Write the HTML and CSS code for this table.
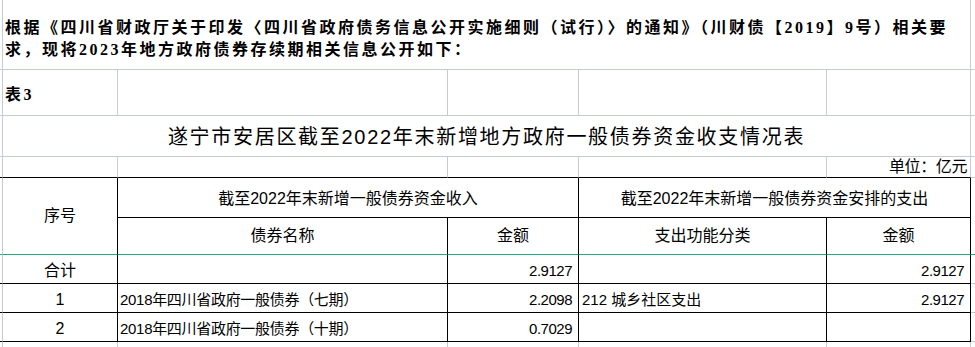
FILE: index.html
```html
<!DOCTYPE html>
<html lang="zh-CN">
<head>
<meta charset="utf-8">
<title>遂宁市安居区截至2022年末新增地方政府一般债券资金收支情况表</title>
<link rel="stylesheet" href="styles.css">
</head>
<body>
<div class="sheet">
  <!-- row 1 -->
  <div class="c edge"></div>
  <div class="c span5 intro">根据《四川省财政厅关于印发〈四川省政府债务信息公开实施细则（试行）〉的通知》（川财债【2019】9号）相关要<br>求，现将2023年地方政府债券存续期相关信息公开如下：</div>
  <div class="c tail"></div>
  <!-- row 2 -->
  <div class="c edge"></div>
  <div class="c label">表3</div>
  <div class="c"></div>
  <div class="c"></div>
  <div class="c"></div>
  <div class="c"></div>
  <div class="c tail"></div>
  <!-- row 3 -->
  <div class="c edge"></div>
  <div class="c span5 title">遂宁市安居区截至2022年末新增地方政府一般债券资金收支情况表</div>
  <div class="c tail"></div>
  <!-- row 4 -->
  <div class="c edge bb"></div>
  <div class="c bb"></div>
  <div class="c bb"></div>
  <div class="c bb"></div>
  <div class="c bb"></div>
  <div class="c bb unit">单位：亿元</div>
  <div class="c tail"></div>
  <!-- rows 5-6 -->
  <div class="c edge rows2 gb"></div>
  <div class="c rows2 br gb head center">序号</div>
  <div class="c cols2 br bb head center grp-in">截至2022年末新增一般债券资金收入</div>
  <div class="c cols2 br bb head center grp-out">截至2022年末新增一般债券资金安排的支出</div>
  <div class="c tail rows2 gb"></div>
  <div class="c br gb head center">债券名称</div>
  <div class="c br gb head center">金额</div>
  <div class="c br gb head center">支出功能分类</div>
  <div class="c br gb head center">金额</div>
  <!-- row 7 -->
  <div class="c edge bb"></div>
  <div class="c br bb head center data">合计</div>
  <div class="c br bb"></div>
  <div class="c br bb num">2.9127</div>
  <div class="c br bb"></div>
  <div class="c br bb num">2.9127</div>
  <div class="c tail"></div>
  <!-- row 8 -->
  <div class="c edge bb"></div>
  <div class="c br bb head center data">1</div>
  <div class="c br bb body">2018年四川省政府一般债券（七期）</div>
  <div class="c br bb num">2.2098</div>
  <div class="c br bb body func">212 城乡社区支出</div>
  <div class="c br bb num">2.9127</div>
  <div class="c tail"></div>
  <!-- row 9 -->
  <div class="c edge bb"></div>
  <div class="c br bb head center data">2</div>
  <div class="c br bb body">2018年四川省政府一般债券（十期）</div>
  <div class="c br bb num">0.7029</div>
  <div class="c br bb"></div>
  <div class="c br bb"></div>
  <div class="c tail"></div>
  <!-- row 10 -->
  <div class="c edge nobot"></div>
  <div class="c nobot"></div>
  <div class="c nobot"></div>
  <div class="c nobot"></div>
  <div class="c nobot"></div>
  <div class="c nobot"></div>
  <div class="c tail nobot"></div>
</div>
</body>
</html>
```
FILE: styles.css
```css
html, body {
  margin: 0;
  padding: 0;
  overflow: hidden;
  background: #ffffff;
}

.sheet {
  display: grid;
  grid-template-columns: 3px 115px 330px 131px 248px 144px 4px;
  grid-template-rows: 70px 46px 41px 21px 40px 37px 29px 29px 29px 5px;
  width: 975px;
  color: #000;
  font-family: "Liberation Sans", "Noto Sans CJK SC", sans-serif;
}

.c {
  box-sizing: border-box;
  border-right: 1px solid #c6cad8;
  border-bottom: 1px solid #c6cad8;
  display: flex;
  align-items: center;
  min-width: 0;
  white-space: nowrap;
}

.tail { border-right: none; }
.nobot { border-bottom: none; }

.bb { border-bottom-color: #000; }
.br { border-right-color: #000; }
.gb { border-bottom-color: #22ad7a; }

.span5 { grid-column: span 5; }
.cols2 { grid-column: span 2; }
.rows2 { grid-row: span 2; }

.intro {
  display: block;
  padding: 17px 0 0 2px;
  font-family: "Liberation Serif", "Noto Sans CJK SC", serif;
  font-weight: bold;
  font-size: 16px;
  line-height: 22px;
  letter-spacing: 2.5px;
}

.label {
  padding: 1px 0 0 2px;
  font-family: "Liberation Serif", "Noto Sans CJK SC", serif;
  font-weight: bold;
  font-size: 16px;
  letter-spacing: 2.5px;
}

.title {
  justify-content: center;
  padding-top: 2px;
  font-size: 20px;
  letter-spacing: 1.7px;
  line-height: 26px;
}

.unit {
  justify-content: flex-end;
  padding-right: 3px;
  font-size: 16px;
  letter-spacing: -0.4px;
  line-height: 20px;
}

.head {
  font-size: 16px;
  line-height: 20px;
}

.center { justify-content: center; }

.grp-in { padding-top: 2px; }
.grp-out { padding-top: 2px; letter-spacing: 0; }

.data { padding-top: 3px; }

.body {
  font-size: 15px;
  line-height: 20px;
  letter-spacing: -0.3px;
  padding: 3px 0 0 2px;
}

.func {
  padding-left: 3px;
  letter-spacing: 0;
}

.num {
  justify-content: flex-end;
  font-size: 15px;
  line-height: 20px;
  letter-spacing: -0.5px;
  padding: 3px 6px 0 0;
}
```
